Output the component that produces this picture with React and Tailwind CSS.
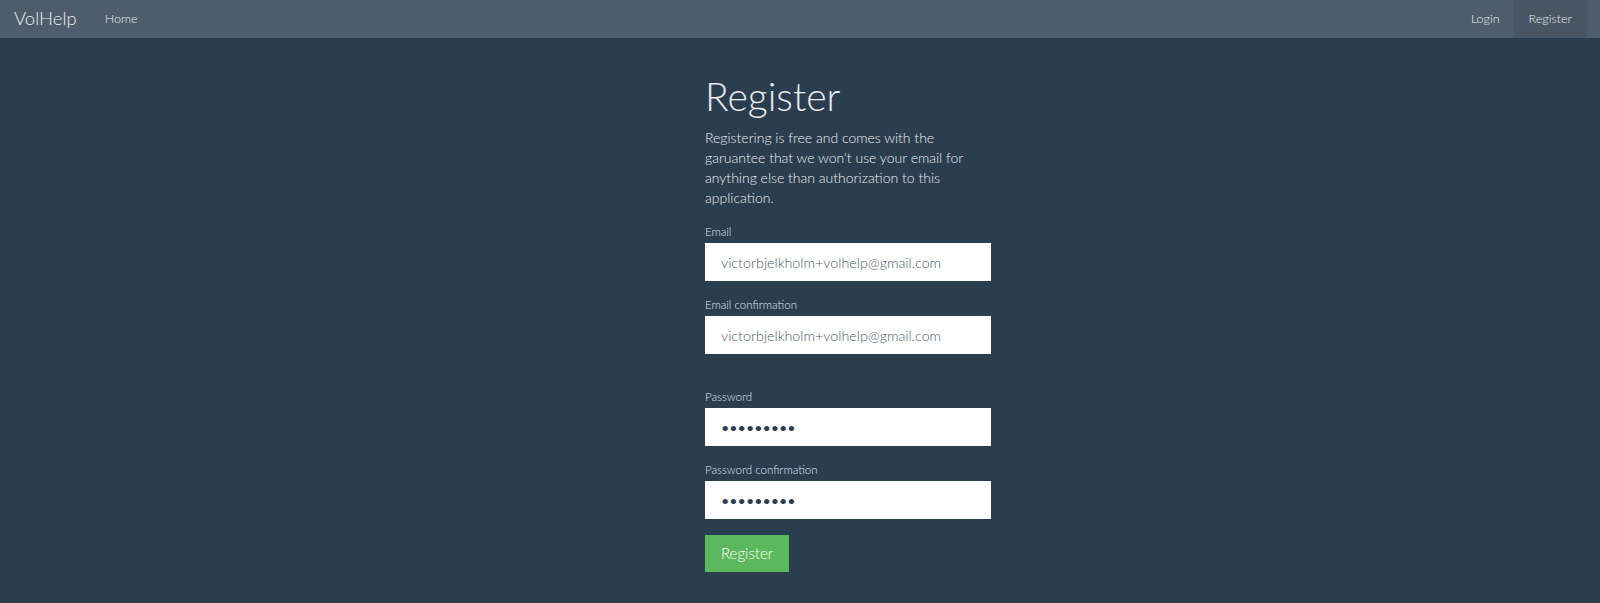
// Register page, dark slate theme with a flat top bar.
function Field({ label, type = 'text', value, className = '' }) {
  return (
    <div className={`mb-[16px] ${className}`}>
      <label className="mb-[3px] block text-[11.5px] leading-[16px] text-[#dfe3e7]">{label}</label>
      <input
        type={type}
        defaultValue={value}
        readOnly
        className={`block h-[38px] w-full bg-white px-[16px] text-[14.3px] outline-none ${
          type === 'password' ? 'font-normal text-[#2b3e50]' : 'font-light text-[#4e5d6c]'
        }`}
      />
    </div>
  );
}

export default function App() {
  return (
    <div className="min-h-[603px] bg-[#2b3e50] font-['Lato',sans-serif] font-light text-[#ebebeb]">
      <nav className="flex h-[38px] items-stretch bg-[#4e5d6c]">
        <a className="flex items-center pl-[14px] pr-[28px] text-[18.5px] text-[#ebebeb]">VolHelp</a>
        <a className="flex items-center text-[12.5px] text-[#ebebeb]">Home</a>
        <div className="ml-auto mr-[13px] flex items-stretch text-[12.5px]">
          <a className="flex items-center px-[14px]">Login</a>
          <a className="flex items-center bg-[#485563] px-[15px]">Register</a>
        </div>
      </nav>

      <main className="ml-[705px] w-[286px] pt-[37px]">
        <h1 className="text-[39px] leading-[43px]">Register</h1>
        <p className="mt-[10px] text-[14px] leading-[20px]">
          Registering is free and comes with the garuantee that we won't use your email for anything
          else than authorization to this application.
        </p>

        <form className="mt-[16px]">
          <Field label="Email" value="victorbjelkholm+volhelp@gmail.com" />
          <Field label="Email confirmation" value="victorbjelkholm+volhelp@gmail.com" className="mb-[35px]" />
          <Field label="Password" type="password" value="123456789" />
          <Field label="Password confirmation" type="password" value="123456789" className="mb-[11px]" />
          <button type="button" className="block h-[37px] w-[84px] bg-[#5cb85c] text-[15px] text-white">
            Register
          </button>
        </form>
      </main>
    </div>
  );
}
